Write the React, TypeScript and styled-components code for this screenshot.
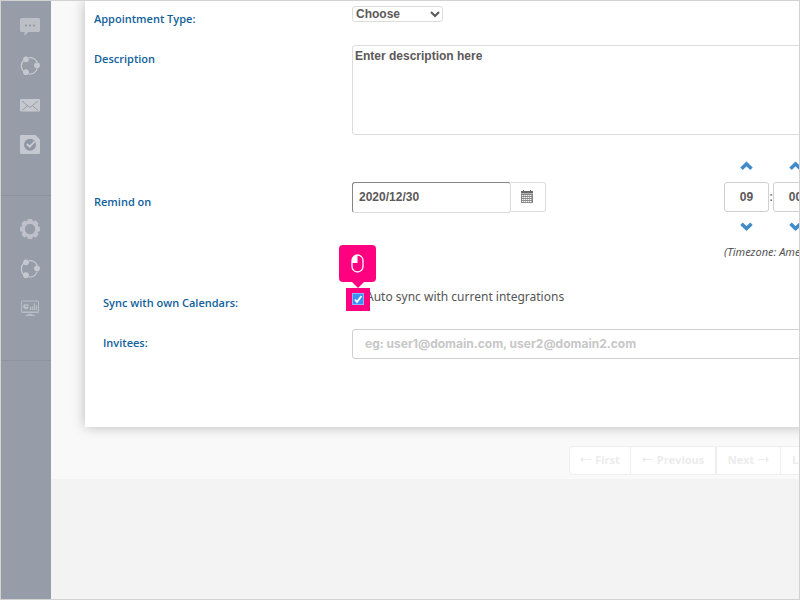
import React from "react";
import styled, { createGlobalStyle, css } from "styled-components";

const humanist = '"Noto Sans", "Open Sans", sans-serif';
const caption = '"Open Sans", "Noto Sans", sans-serif';
const grotesque = '"Liberation Sans", Arial, sans-serif';

const GlobalStyle = createGlobalStyle`
  * { box-sizing: border-box; }
  body { margin: 0; background: #f3f3f3; font-family: ${humanist}; color: #555; }
  button, input, select, textarea { margin: 0; }
`;

const Frame = styled.div`
  display: flex;
  height: 100vh;
  border: 1px solid #d2d2d2;
  overflow: hidden;
`;

const Sidebar = styled.nav`
  flex: none;
  width: 50px;
  background: #969da9;
`;

const NavGroup = styled.div<{ $top: number; $bottom: number }>`
  display: flex;
  flex-direction: column;
  padding: ${(p) => p.$top}px 0 ${(p) => p.$bottom}px 8px;
  border-bottom: 1px solid #8d939d;
`;

const NavButton = styled.button`
  display: grid;
  place-items: center;
  height: 39px;
  padding: 0;
  border: 0;
  background: none;
  color: #c5c8cf;
  cursor: pointer;
`;

const Main = styled.main`
  flex: 1;
  min-width: 0;
  overflow: hidden;
`;

const Workspace = styled.div`
  width: calc(100% + 60px);
  padding: 0 24px 4px 34px;
  background: #f9f9f9;
`;

const Card = styled.form`
  padding: 0 9px 68px;
  background: #fff;
  box-shadow: 0 0 12px rgba(0, 0, 0, 0.26);
`;

const Row = styled.div<{ $height: number }>`
  display: grid;
  grid-template-columns: 258px minmax(0, 1fr);
  align-items: start;
  min-height: ${(p) => p.$height}px;
`;

const Caption = styled.label<{ $top: number; $indent?: boolean }>`
  padding-top: ${(p) => p.$top}px;
  padding-left: ${(p) => (p.$indent ? 9 : 0)}px;
  font: 600 11px/16px ${caption};
  color: #11619b;
`;

const control = css`
  border: 1px solid #d0d0d0;
  border-radius: 3px;
  background: #fff;
  color: #5c5859;
  font: 700 12px/16px ${grotesque};
`;

const SelectWrap = styled.div`
  position: relative;
  width: 91px;
  margin-top: 5px;
`;

const Select = styled.select`
  ${control}
  display: block;
  width: 100%;
  height: 16px;
  padding: 0 3px;
  border-color: #dcdcdc;
  line-height: 14px;
  appearance: none;
`;

const SelectArrow = styled.svg`
  position: absolute;
  top: 5px;
  right: 3px;
  pointer-events: none;
`;

const TextArea = styled.textarea`
  ${control}
  display: block;
  height: 90px;
  margin-top: 4px;
  padding: 2px;
  border-color: #dcdcdc;
  resize: none;
`;

const RemindFields = styled.div`
  display: grid;
  grid-template-columns: 372px 1fr;
  align-items: start;
`;

const DateGroup = styled.div`
  display: flex;
  align-items: flex-start;
  margin-top: 25px;
`;

const DateInput = styled.input`
  ${control}
  width: 159px;
  height: 31px;
  padding: 0 6px 1px;
  border-color: #858585 #dcdcdc #dcdcdc #858585;
`;

const CalendarButton = styled.button`
  display: grid;
  place-items: center;
  width: 35px;
  height: 30px;
  padding: 0 2px 2px 0;
  border: 1px solid #dedede;
  border-left: 0;
  border-radius: 0 3px 3px 0;
  background: #fff;
  color: #686868;
`;

const TimePicker = styled.div`
  display: flex;
  align-items: center;
  font: 12px/16px ${humanist};
`;

const Spinner = styled.div`
  display: flex;
  flex-direction: column;
  width: 45px;
`;

const StepButton = styled.button`
  display: grid;
  place-items: center;
  height: 16px;
  margin: 1px 0 8px;
  padding: 0;
  border: 0;
  background: none;
  color: #428bca;
  & ~ & { margin: 7px 0 0; }
`;

const TimeInput = styled.input`
  ${control}
  width: 45px;
  height: 30px;
  padding: 0;
  text-align: center;
`;

const Colon = styled.span`
  width: 4px;
  padding-top: 2px;
  text-align: center;
`;

const Timezone = styled.em`
  display: block;
  margin-top: 9px;
  font: italic 11px/16px ${humanist};
  white-space: nowrap;
`;

const SyncOption = styled.div`
  display: flex;
  align-items: flex-start;
`;

const CheckTarget = styled.div`
  position: relative;
  z-index: 1;
  width: 24px;
  height: 23px;
  margin: -1px 0 0 -6px;
  padding: 5px 5px 5px 6px;
  background: #ff0080;
`;

const Checkbox = styled.input`
  display: block;
  width: 12px;
  height: 12px;
  margin: 0;
  border: 1px solid #8ab8f5;
  background: #3a90fa;
  appearance: none;
`;

const Tick = styled.svg`
  position: absolute;
  top: 5px;
  left: 6px;
  pointer-events: none;
`;

const Callout = styled.div`
  position: absolute;
  left: -7px;
  bottom: 29px;
  display: grid;
  place-items: center;
  width: 37px;
  height: 37px;
  border-radius: 4px;
  background: #ff0080;
  &::after {
    content: "";
    position: absolute;
    top: 100%;
    left: 13px;
    border: 6px solid transparent;
    border-top-color: #ff0080;
    border-bottom: 0;
  }
`;

const SyncText = styled.label`
  margin-left: -4px;
  font: 12px/16px ${humanist};
`;

const InviteInput = styled.input`
  ${control}
  height: 30px;
  margin-top: 4px;
  padding: 0 12px;
  &::placeholder { color: #c7c7c7; opacity: 1; font: 700 12px/16px Inter, sans-serif; }
`;

const Pager = styled.div`
  display: flex;
  justify-content: flex-end;
  margin-top: 19px;
`;

const PageButton = styled.button<{ $width: number; $divided?: boolean }>`
  display: flex;
  align-items: center;
  justify-content: center;
  gap: 4px;
  width: ${(p) => p.$width}px;
  height: 29px;
  padding: 0 0 2px;
  border: 1px solid #eee;
  border-right-width: ${(p) => (p.$divided ? 2 : 1)}px;
  background: #fff;
  color: #ececec;
  font: 700 11px/16px ${caption};
  & + & { border-left: 0; }
  &:first-child { border-radius: 4px 0 0 4px; }
  &:last-child {
    justify-content: flex-start;
    padding-left: 11px;
    border-radius: 0 4px 4px 0;
  }
`;

const ChatIcon = () => (
  <svg width="20" height="18" viewBox="0 0 20 18" aria-hidden="true">
    <path fill="#bcc0c6" d="M1.5 0h17A1.5 1.5 0 0 1 20 1.500v11a1.5 1.5 0 0 1-1.500 1.500H8.500L4.500 17.500v-3.500h-3A1.500 1.500 0 0 1 0 12.500V1.500A1.500 1.500 0 0 1 1.500 0z" />
    <g fill="#9198a4">
      <circle cx="6" cy="7.500" r="1.100" /><circle cx="10" cy="7.500" r="1.100" /><circle cx="14" cy="7.500" r="1.100" />
    </g>
  </svg>
);

const NetworkIcon = () => (
  <svg width="20" height="20" viewBox="0 0 20 20" aria-hidden="true">
    <g fill="none" stroke="currentColor" strokeWidth="1.3">
      <path d="M3.6 4.2A8.4 8.4 0 0 0 3.7 15.8" />
      <path d="M9 1.6A8.4 8.4 0 0 1 17.2 6.4" />
      <path d="M17.2 12.4A8.4 8.4 0 0 1 9 18.2" />
    </g>
    <g fill="currentColor">
      <circle cx="6" cy="3.3" r="2.9" /><circle cx="6" cy="16.2" r="2.9" /><circle cx="17" cy="9.3" r="2.9" />
    </g>
  </svg>
);

const MailIcon = () => (
  <svg width="20" height="16" viewBox="0 0 20 16" aria-hidden="true">
    <rect y="2" width="20" height="12.500" rx="1" fill="currentColor" />
    <path d="M2 4l8 6.500L18 4M2 13.500l5.700-5M18 13.500l-5.700-5" fill="none" stroke="#9299a5" strokeWidth=".9" />
  </svg>
);

const TaskIcon = () => (
  <svg width="20" height="21" viewBox="0 0 20 21" aria-hidden="true">
    <path fill="currentColor" d="M1.2 2h14.300L20 6.500v13.300a1.200 1.200 0 0 1-1.200 1.200H1.200A1.200 1.200 0 0 1 0 19.800V3.200A1.200 1.200 0 0 1 1.200 2z" />
    <circle cx="10" cy="11.800" r="6" fill="#8f96a3" />
    <path d="M7 11l2.700 2.700 5-5.200" fill="none" stroke="#c9ccd2" strokeWidth="1.800" />
  </svg>
);

const GearIcon = () => (
  <svg width="20" height="21" viewBox="0 0 20 21" aria-hidden="true">
    <g fill="#bfc0c9">
      {[0, 45, 90, 135].map((a) => (
        <rect key={a} x="7.5" y="0" width="5" height="20" rx="1" transform={`rotate(${a} 10 10)`} />
      ))}
      <circle cx="10" cy="10" r="8.500" />
    </g>
    <circle cx="10" cy="10" r="5.200" fill="#969da9" />
  </svg>
);

const MonitorIcon = () => (
  <svg width="20" height="16" viewBox="0 0 20 16" aria-hidden="true">
    <rect x="1.500" y="1" width="17" height="11.500" rx=".6" fill="none" stroke="#b9bdc5" />
    <path d="M1.500 12h17M5.500 15.300h9M8 14.300h4" stroke="#b9bdc5" strokeWidth="1.200" />
    <circle cx="6" cy="6.500" r="2.800" fill="#b9bdc5" />
    <path d="M6 6.500V4M6 6.500h3" stroke="#969da9" strokeWidth=".7" />
    <path d="M10.500 10V7M12.500 10V6.500M14.500 10V3.500M16.500 10V5.500" stroke="#b9bdc5" strokeWidth="1.300" />
  </svg>
);

const CalendarIcon = () => (
  <svg width="12" height="13" viewBox="0 0 12 13" aria-hidden="true">
    <path fill="currentColor" d="M0 1h2V0h1v1h6V0h1v1h2v2.500H0z" />
    <rect y="4" width="12" height="9" fill="#858585" />
    <g fill="#fff">
      {[5, 7, 9, 11].map((y) =>
        [1, 3, 5, 7, 9].map((x) => <rect key={`${x}-${y}`} x={x + 0.1} y={y} width="1.300" height="1.100" />)
      )}
    </g>
  </svg>
);

const Chevron = ({ down = false }: { down?: boolean }) => (
  <svg width="13" height="10" viewBox="0 0 13 10" aria-hidden="true">
    <path d={down ? "M1.500 1.800l5 4.700 5-4.700" : "M1.500 7.700l5-4.700 5 4.700"} fill="none" stroke="currentColor" strokeWidth="3.600" />
  </svg>
);

const MouseIcon = () => (
  <svg width="13" height="19" viewBox="0 0 13 19" aria-hidden="true">
    <path d="M6.500 1v8H1V6.500A5.500 5.500 0 0 1 6.500 1z" fill="#fff" />
    <rect x="1" y="1" width="11" height="17" rx="5.500" fill="none" stroke="#fff" strokeWidth="1.300" />
  </svg>
);

const Arrow = ({ right = false }: { right?: boolean }) => (
  <svg width="11" height="7" viewBox="0 0 11 7" aria-hidden="true">
    <path d={right ? "M0 3h8V.5l3 3-3 3V4H0z" : "M11 3H3V.5l-3 3 3 3V4h8z"} fill="currentColor" />
  </svg>
);

const TimeSpinner = ({ name, value }: { name: string; value: string }) => (
  <Spinner>
    <StepButton type="button" aria-label={`Increase ${name}`}><Chevron /></StepButton>
    <TimeInput aria-label={name} defaultValue={value} />
    <StepButton type="button" aria-label={`Decrease ${name}`}><Chevron down /></StepButton>
  </Spinner>
);

export default function App() {
  return (
    <>
      <GlobalStyle />
      <Frame>
        <Sidebar aria-label="Main">
          <NavGroup $top={6} $bottom={32}>
            <NavButton aria-label="Messages"><ChatIcon /></NavButton>
            <NavButton aria-label="Network"><NetworkIcon /></NavButton>
            <NavButton aria-label="Mail"><MailIcon /></NavButton>
            <NavButton aria-label="Tasks"><TaskIcon /></NavButton>
          </NavGroup>
          <NavGroup $top={14} $bottom={33}>
            <NavButton aria-label="Settings"><GearIcon /></NavButton>
            <NavButton aria-label="Integrations"><NetworkIcon /></NavButton>
            <NavButton aria-label="Reports"><MonitorIcon /></NavButton>
          </NavGroup>
        </Sidebar>
        <Main>
          <Workspace>
            <Card>
              <Row $height={40}>
                <Caption htmlFor="type" $top={10}>Appointment Type:</Caption>
                <SelectWrap>
                  <Select id="type"><option>Choose</option></Select>
                  <SelectArrow width="10" height="7" viewBox="0 0 10 7" aria-hidden="true">
                    <path d="M1 1l4 4 4-4" fill="none" stroke="#5c5859" strokeWidth="2" />
                  </SelectArrow>
                </SelectWrap>
              </Row>
              <Row $height={116}>
                <Caption htmlFor="description" $top={10}>Description</Caption>
                <TextArea id="description" defaultValue="Enter description here" />
              </Row>
              <Row $height={132}>
                <Caption htmlFor="remind" $top={37}>Remind on</Caption>
                <RemindFields>
                  <DateGroup>
                    <DateInput id="remind" defaultValue="2020/12/30" />
                    <CalendarButton type="button" aria-label="Open calendar"><CalendarIcon /></CalendarButton>
                  </DateGroup>
                  <div>
                    <TimePicker>
                      <TimeSpinner name="Hours" value="09" />
                      <Colon>:</Colon>
                      <TimeSpinner name="Minutes" value="00" />
                    </TimePicker>
                    <Timezone>(Timezone: America)</Timezone>
                  </div>
                </RemindFields>
              </Row>
              <Row $height={36}>
                <Caption as="span" $top={6} $indent>Sync with own Calendars:</Caption>
                <SyncOption>
                  <CheckTarget>
                    <Checkbox id="sync" type="checkbox" defaultChecked />
                    <Tick width="12" height="12" viewBox="0 0 12 12" aria-hidden="true">
                      <path d="M3 6.500l2 2.500L9.500 3" fill="none" stroke="#fff" strokeWidth="1.800" />
                    </Tick>
                    <Callout><MouseIcon /></Callout>
                  </CheckTarget>
                  <SyncText htmlFor="sync">Auto sync with current integrations</SyncText>
                </SyncOption>
              </Row>
              <Row $height={34}>
                <Caption htmlFor="invitees" $top={10} $indent>Invitees:</Caption>
                <InviteInput id="invitees" placeholder="eg: user1@domain.com, user2@domain2.com" />
              </Row>
            </Card>
            <Pager>
              <PageButton $width={62}><Arrow />First</PageButton>
              <PageButton $width={86} $divided><Arrow />Previous</PageButton>
              <PageButton $width={64}>Next<Arrow right /></PageButton>
              <PageButton $width={54}>Last</PageButton>
            </Pager>
          </Workspace>
        </Main>
      </Frame>
    </>
  );
}
